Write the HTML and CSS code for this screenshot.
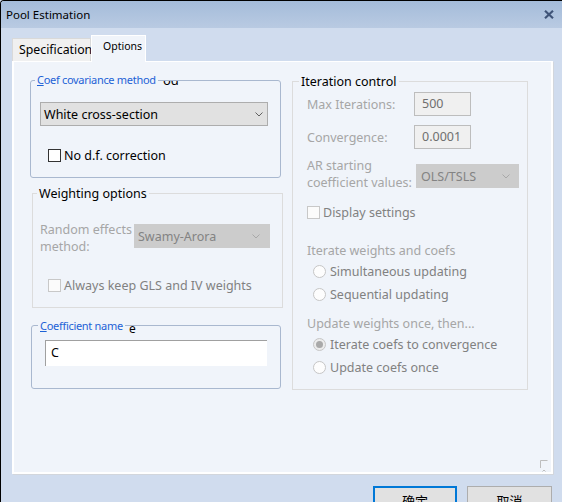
FILE: index.html
```html
<!DOCTYPE html>
<html>
<head>
<meta charset="utf-8">
<title>Pool Estimation</title>
<link rel="stylesheet" href="styles.css">
</head>
<body>
<div class="window">
  <div class="titlebar">
    <span class="title">Pool Estimation</span>
    <svg class="close" width="10" height="9" viewBox="0 0 10 9"><path d="M1 0.8 L9 8.2 M9 0.8 L1 8.2" stroke="#3f5478" stroke-width="2.2" fill="none"/></svg>
  </div>
  <div class="client">
    <div class="tabs">
      <div class="tab">Specification</div>
      <div class="tab active">Options</div>
    </div>
    <div class="panel">
      <div class="col-left">
        <div class="group blue g-cov">
          <span class="legend blue-text leg-cov"><u>C</u>oef covariance method</span>
          <span class="ghost ghost-od"><span>od</span></span>
          <div class="select sel-white">
            <span>White cross-section</span>
            <svg width="8" height="5" viewBox="0 0 8 5"><path d="M0.5 0.5 L4 4 L7.5 0.5" fill="none" stroke="#606060"/></svg>
          </div>
          <div class="check check-df"><span class="box"></span><span>No d.f. correction</span></div>
        </div>
        <div class="group g-weight">
          <span class="legend leg-weight">Weighting options</span>
          <div class="re-row">
            <div class="dim re-label">Random effects<br>method:</div>
            <div class="select disabled sel-swamy">
              <span>Swamy-Arora</span>
              <svg width="8" height="5" viewBox="0 0 8 5"><path d="M0.5 0.5 L4 4 L7.5 0.5" fill="none" stroke="#a8a8a8"/></svg>
            </div>
          </div>
          <div class="check check-gls off"><span class="box"></span><span>Always keep GLS and IV weights</span></div>
        </div>
        <div class="group blue g-name">
          <span class="legend blue-text leg-name"><u>C</u>oefficient name</span>
          <span class="ghost ghost-e"><span>e</span></span>
          <div class="namebox">C</div>
        </div>
      </div>
      <div class="col-right">
        <div class="group g-iter">
          <span class="legend leg-iter">Iteration control</span>
          <div class="field-row">
            <div class="dim f-label">Max Iterations:</div>
            <div class="tbox">500</div>
          </div>
          <div class="field-row row2">
            <div class="dim f-label">Convergence:</div>
            <div class="tbox">0.0001</div>
          </div>
          <div class="ar-row">
            <div class="dim ar-label">AR starting<br>coefficient values:</div>
            <div class="select disabled sel-ols">
              <span>OLS/TSLS</span>
              <svg width="8" height="5" viewBox="0 0 8 5"><path d="M0.5 0.5 L4 4 L7.5 0.5" fill="none" stroke="#a8a8a8"/></svg>
            </div>
          </div>
          <div class="check check-disp off"><span class="box"></span><span>Display settings</span></div>
          <div class="dim section sec1">Iterate weights and coefs</div>
          <div class="radio-row first"><span class="radio"></span><span>Simultaneous updating</span></div>
          <div class="radio-row"><span class="radio"></span><span>Sequential updating</span></div>
          <div class="dim section sec2">Update weights once, then...</div>
          <div class="radio-row first"><span class="radio on"></span><span>Iterate coefs to convergence</span></div>
          <div class="radio-row"><span class="radio"></span><span>Update coefs once</span></div>
        </div>
      </div>
      <svg class="grip" width="8" height="12" viewBox="0 0 8 12"><path d="M0.5 8 V0.5 H7.5" fill="none" stroke="#bdbdbd"/><path d="M2.5 11.5 L4 10 L5.5 11.5" fill="none" stroke="#bdbdbd"/></svg>
    </div>
    <div class="footer">
      <div class="btn default">确定</div>
      <div class="btn">取消</div>
    </div>
  </div>
</div>
</body>
</html>
```

FILE: styles.css
```css
* { box-sizing: border-box; }
html, body { margin: 0; padding: 0; }
body {
  width: 562px;
  height: 502px;
  overflow: hidden;
  background: #d0dcee;
  font-family: "Noto Sans", "Noto Sans CJK SC", sans-serif;
  color: #000;
}
.window {
  width: 562px;
  height: 502px;
  border-left: 1px solid #000;
  border-top: 1px solid #000;
  border-top-left-radius: 4px;
  background: #d0dcee;
  display: flex;
  flex-direction: column;
  overflow: hidden;
}
.titlebar {
  height: 27px;
  flex: none;
  display: flex;
  align-items: center;
  justify-content: space-between;
  padding: 0 8px 0 5px;
  background: linear-gradient(#a4bcda, #b9cae2);
}
.title { font-size: 11.5px; line-height: 14px; }
.close { display: block; }
.client {
  flex: 1;
  display: flex;
  flex-direction: column;
  padding: 0 10px 0 11px;
}
.tabs {
  display: flex;
  align-items: flex-end;
  margin-top: 7px;
  height: 26px;
}
.tab {
  width: 79px;
  height: 23px;
  padding-left: 6px;
  background: #f0f0f0;
  border: 1px solid #d9d9d9;
  border-bottom: none;
  font-size: 12.3px;
  line-height: 21px;
  white-space: nowrap;
}
.tab.active {
  width: 55px;
  height: 27px;
  margin-bottom: -1px;
  position: relative;
  z-index: 1;
  background: #f0f4fa;
  border-color: #fff;
  font-size: 10.5px;
  line-height: 14px;
  padding: 3px 0 0 11px;
}
.panel {
  position: relative;
  width: 541px;
  height: 413px;
  flex: none;
  background: #f0f4fa;
  border: 2px solid #fff;
  border-top-width: 1px;
  box-shadow: 1px 1px 0 #d2d6dc;
  display: flex;
  align-items: flex-start;
  gap: 9px;
  padding: 18px 0 0 16px;
}
.col-left { width: 253px; display: flex; flex-direction: column; }
.col-right { width: 236px; margin-top: 1px; }

.group { position: relative; border: 1px solid #dcdcdc; }
.group.blue { border-color: #a9b8cf; border-radius: 3px; }
.g-cov { width: 251px; height: 98px; padding: 21px 0 0 9px; }
.g-weight { width: 251px; height: 115px; margin: 15px 0 0 2px; padding: 27px 0 0 7px; }
.g-name { width: 250px; height: 64px; margin: 17px 0 0 1px; padding: 14px 0 0 13px; }
.g-iter { width: 236px; height: 309px; padding: 10px 0 0 14px; }

.legend {
  position: absolute;
  padding: 0 2px;
  background: #f0f4fa;
  white-space: nowrap;
  font-size: 12.5px;
  line-height: 16px;
}
.blue-text {
  font-size: 11px;
  line-height: 13px;
  letter-spacing: -0.3px;
  color: #1d62d6;
}
.blue-text u { text-decoration-thickness: 1px; text-underline-offset: 1px; }
.leg-cov { left: 4px; top: -8px; }
.leg-name { left: 6px; top: -7px; }
.leg-weight { left: 4px; top: -8px; }
.leg-iter { left: 6px; top: -8px; }

.ghost {
  position: absolute;
  top: 0;
  height: 6px;
  overflow: hidden;
  font-size: 13px;
  line-height: 13px;
}
.ghost span { display: block; margin-top: -7px; }
.ghost-od { left: 132px; }
.ghost-e { left: 97px; height: 7px; font-size: 12px; }
.ghost-e span { margin-top: -4px; }

.select {
  display: flex;
  align-items: center;
  justify-content: space-between;
  height: 24px;
  border: 1px solid #adadad;
  background: #e1e1e1;
  padding: 0 4px 0 3px;
  font-size: 12.5px;
  white-space: nowrap;
}
.select svg { display: block; flex: none; }
.select.disabled { background: #cccccc; border-color: #cccccc; color: #838383; }
.sel-white { width: 228px; }
.sel-swamy { width: 136px; margin-top: 3px; padding-right: 9px; }
.sel-ols { width: 103px; margin-top: 7px; padding-left: 4px; padding-right: 8px; }

.dim { color: #a6a6a6; font-size: 12.5px; line-height: 17px; white-space: nowrap; }

.check {
  display: flex;
  align-items: center;
  gap: 3px;
  height: 17px;
  font-size: 12.5px;
  line-height: 17px;
  white-space: nowrap;
}
.box {
  width: 13px;
  height: 13px;
  flex: none;
  border: 1px solid #333;
  background: #fff;
}
.check.off { color: #818181; }
.check.off .box { border-color: #c8c8c8; background: #fbfbfb; }
.check-df { margin: 21px 0 0 8px; }
.check-gls { margin: 22px 0 0 8px; }
.check-disp { margin-top: 13px; }

.re-row { display: flex; align-items: flex-start; }
.re-label { width: 94px; }

.namebox {
  width: 222px;
  height: 26px;
  background: #fff;
  border-top: 1px solid #a0a0a0;
  border-left: 1px solid #a0a0a0;
  padding-left: 5px;
  font-size: 12.5px;
  line-height: 24px;
}

.field-row { display: flex; align-items: center; height: 24px; }
.row2 { margin-top: 9px; }
.f-label { width: 107px; }
.tbox {
  width: 57px;
  height: 24px;
  background: #f0f0f0;
  border: 1px solid #bdbdbd;
  padding-left: 7px;
  font-size: 12.5px;
  line-height: 22px;
  color: #6f6f6f;
}
.ar-row { display: flex; align-items: flex-start; margin-top: 8px; }
.ar-label { width: 109px; }

.sec1 { margin-top: 21px; }
.sec2 { margin-top: 9px; }

.radio-row {
  display: flex;
  align-items: center;
  gap: 4px;
  height: 23px;
  margin-left: 6px;
  font-size: 12.5px;
  color: #818181;
  white-space: nowrap;
}
.radio-row.first { margin-top: 1px; }
.radio {
  width: 13px;
  height: 13px;
  flex: none;
  border-radius: 50%;
  border: 1px solid #c6c6c6;
  background: #fdfdfd;
  display: flex;
  align-items: center;
  justify-content: center;
}
.radio.on { background: #ececec; }
.radio.on::after {
  content: "";
  width: 7px;
  height: 7px;
  border-radius: 50%;
  background: #a9a9a9;
}

.grip { position: absolute; right: 3px; bottom: 0; display: block; }

.footer {
  display: flex;
  justify-content: flex-end;
  gap: 10px;
  margin-top: 12px;
}
.btn {
  width: 85px;
  height: 28px;
  flex: none;
  background: #e1e1e1;
  border: 1px solid #adadad;
  display: flex;
  align-items: center;
  justify-content: center;
  font-size: 13px;
  font-family: "Noto Sans CJK SC", sans-serif;
}
.btn.default { width: 84px; border: 2px solid #0078d7; }
```
